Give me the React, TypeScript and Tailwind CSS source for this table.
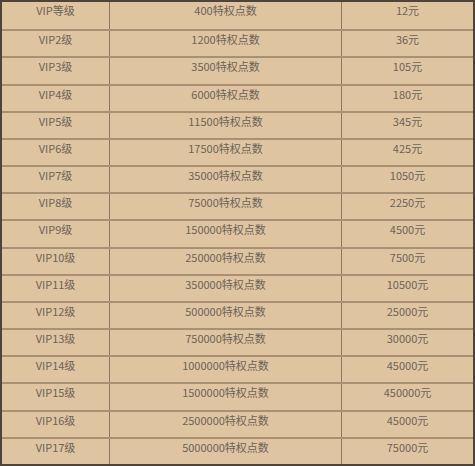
const rows = [
  ["VIP等级", "400特权点数", "12元"],
  ["VIP2级", "1200特权点数", "36元"],
  ["VIP3级", "3500特权点数", "105元"],
  ["VIP4级", "6000特权点数", "180元"],
  ["VIP5级", "11500特权点数", "345元"],
  ["VIP6级", "17500特权点数", "425元"],
  ["VIP7级", "35000特权点数", "1050元"],
  ["VIP8级", "75000特权点数", "2250元"],
  ["VIP9级", "150000特权点数", "4500元"],
  ["VIP10级", "250000特权点数", "7500元"],
  ["VIP11级", "350000特权点数", "10500元"],
  ["VIP12级", "500000特权点数", "25000元"],
  ["VIP13级", "750000特权点数", "30000元"],
  ["VIP14级", "1000000特权点数", "45000元"],
  ["VIP15级", "1500000特权点数", "450000元"],
  ["VIP16级", "2500000特权点数", "45000元"],
  ["VIP17级", "5000000特权点数", "75000元"],
];

export default function App() {
  return (
    <div
      className="w-[475px] h-[466px] bg-[#dfc4a2] border-2 border-[#4f4439] grid grid-rows-[repeat(17,1fr)] text-[11px] text-[#6c6357]"
      style={{ fontFamily: '"Noto Sans CJK SC", "Noto Sans", sans-serif' }}
    >
      {rows.map((r, i) => (
        <div
          key={i}
          className={`grid grid-cols-[108px_232px_1fr] ${i > 0 ? "border-t-2 border-[#a89075]" : ""}`}
        >
          <div className="text-center pt-[1px] leading-[14px] border-r border-[#8c7862]">{r[0]}</div>
          <div className="text-center pt-[1px] leading-[14px] border-r border-[#8c7862]">{r[1]}</div>
          <div className="text-center pt-[1px] leading-[14px]">{r[2]}</div>
        </div>
      ))}
    </div>
  );
}
